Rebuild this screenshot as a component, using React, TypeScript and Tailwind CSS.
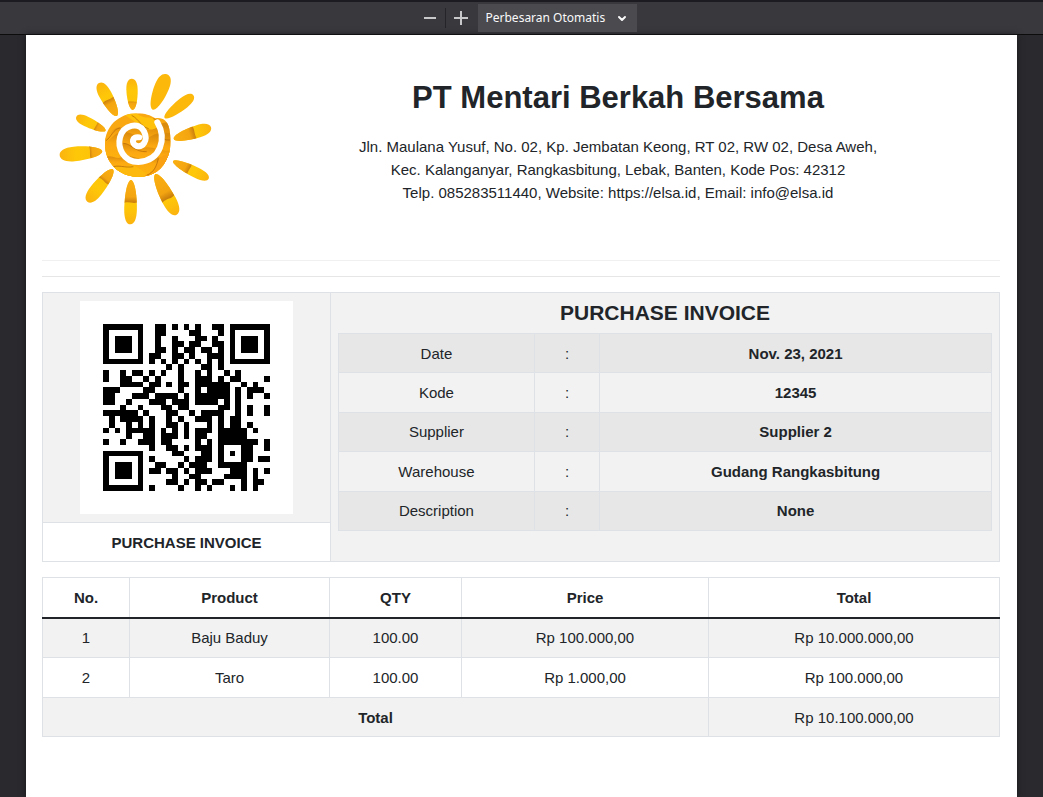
const QR_ROWS = [
  "#######..##.#.#.#..##.#######",
  "#.....#..##....##...#.#.....#",
  "#.###.#..#..#...##.#..#.###.#",
  "#.###.#..#..##.##..##.#.###.#",
  "#.###.#..##.#.##.##.#.#.###.#",
  "#.....#.##..##.#..###.#.....#",
  "#######.#.#.#.#.#.#.#.#######",
  "...........#.#...##.#........",
  "#..#.##.#.#..#..#.#..#.#.....",
  "#..##..#.#...#..###.#.##....#",
  "...####.##.#.##.######..#.#..",
  "###....##....#..#.####.#.###.",
  "##...###.####.#.######.#.#..#",
  "##..#...###.###.####.#.#.....",
  "...#..#...##.##.....##.#.#..#",
  "######.#...##..#.####..#.#..#",
  ".#.####.#..#.#..###.#.##.....",
  ".#..#.#.#..##.#...#.#.##.#...",
  "#.#.#####.#.#.#.###.#####.#..",
  "....#..##.###.#.##..#####....",
  "#..#..###.##....#.#.#######.#",
  "........#..##.#.###.#...##..#",
  "#######.....##...##.#.#.##...",
  "#.....#.#.....#.###.#...##.##",
  "#.###.#..##..#.###..#####....",
  "#.###.#.##.##.#.###...###.#.#",
  "#.###.#.....#..##....####.#..",
  "#.....#....##.#.##.##...#.##.",
  "#######.#....#..#.#...#.#.#..",
];

function QrCode() {
  const d = QR_ROWS.map((row, y) =>
    [...row].map((m, x) => (m === "#" ? `M${x} ${y}h1v1h-1z` : "")).join("")
  ).join("");
  return (
    <svg viewBox="-4 -4 37 37" className="size-[213px] bg-white" shapeRendering="crispEdges" role="img" aria-label="QR code">
      <path d={d} fill="#000" />
    </svg>
  );
}

const RAYS = [
  { tip: [201, 168], end: [147, 69], w: 38, band: 0.48 },
  { tip: [248, 150], end: [245, 56], w: 34, band: 0.25 },
  { tip: [308, 149], end: [351, 43], w: 44, band: -1 },
  { tip: [344, 174], end: [430, 106], w: 34, band: -1 },
  { tip: [371, 237], end: [483, 202], w: 38, band: 0.55 },
  { tip: [369, 303], end: [476, 356], w: 32, band: 0.45 },
  { tip: [316, 342], end: [380, 464], w: 42, band: 0.6 },
  { tip: [243, 360], end: [241, 493], w: 38, band: 0.5 },
  { tip: [189, 328], end: [112, 425], w: 40, band: 0.35 },
  { tip: [157, 274], end: [29, 286], w: 44, band: 0.28 },
  { tip: [167, 212], end: [79, 170], w: 30, band: 0.32 },
];

function Sun() {
  return (
    <svg viewBox="0 0 540 540" className="size-[180px]" role="img" aria-label="PT Mentari Berkah Bersama logo">
      <defs>
        <linearGradient id="ray" x1="0" x2="1">
          <stop offset="0" stopColor="#fcc00a" />
          <stop offset="0.6" stopColor="#fec808" />
          <stop offset="1" stopColor="#fbb30f" />
        </linearGradient>
        <linearGradient id="shade" x1="0" x2="1">
          <stop offset="0" stopColor="#fbb011" />
          <stop offset="0.7" stopColor="#f3a511" />
          <stop offset="1" stopColor="#b96f0a" />
        </linearGradient>
        <linearGradient id="fold" x1="0" y1="1" x2="0.1" y2="0">
          <stop offset="0" stopColor="#ffbd0c" />
          <stop offset="0.78" stopColor="#fca911" />
          <stop offset="1" stopColor="#db8b0c" />
        </linearGradient>
        <clipPath id="disc">
          <path d="M165 253C165 200 205 160 262 160C285 160 301 166 316 175C337 171 354 183 358 207C364 240 362 270 354 289C339 328 310 351 264 351C207 349 165 309 165 253Z" />
        </clipPath>
      </defs>
      {RAYS.map(({ tip, end, w, band }, i) => {
        const dx = end[0] - tip[0];
        const dy = end[1] - tip[1];
        const l = Math.hypot(dx, dy);
        const h = w / 2;
        const a = (Math.atan2(dy, dx) * 180) / Math.PI;
        const body = `M0 0C${l * 0.02} ${-h * 0.65} ${l * 0.38} ${-h} ${l * 0.66} ${-h}C${l * 0.88} ${-h} ${l} ${-h * 0.62} ${l} 0C${l} ${h * 0.62} ${l * 0.88} ${h} ${l * 0.66} ${h}C${l * 0.38} ${h} ${l * 0.02} ${h * 0.65} 0 0Z`;
        const b = l * band;
        return (
          <g key={i} transform={`translate(${tip[0]} ${tip[1]}) rotate(${a})`}>
            <clipPath id={`ray-${i}`}>
              <path d={body} />
            </clipPath>
            <path d={body} fill={band < 0 ? "#fdb80c" : "url(#ray)"} />
            {band > 0 && (
              <path
                clipPath={`url(#ray-${i})`}
                d={`M-5 -30H${b - 8}C${b + 14} -12 ${b - 10} 6 ${b + 8} 30H-5Z`}
                fill="url(#shade)"
              />
            )}
          </g>
        );
      })}
      <g clipPath="url(#disc)">
        <path d="M150 150H380V360H150Z" fill="#f9a812" />
        <path d="M150 245C178 235 180 205 208 202C250 202 250 175 285 197C310 208 330 182 380 185V370H150Z" fill="url(#fold)" />
        <path d="M255 155C280 185 305 160 330 190C320 212 300 212 278 203C260 190 245 178 225 165Z" fill="#ffc10a" />
        <path d="M150 260C190 235 190 215 225 215C255 220 270 240 300 230C325 215 345 215 380 222V370H150Z" fill="url(#fold)" />
        <path d="M215 248C238 250 250 270 278 264C310 255 330 280 370 270V370H190Z" fill="url(#fold)" />
        <path d="M150 300C178 275 195 300 215 292C245 278 262 305 300 295C320 288 340 300 380 290V370H150Z" fill="url(#fold)" />
        <path d="M180 330C195 312 215 325 235 318C262 310 280 342 300 344L280 370H180Z" fill="#fdb90d" />
        <path d="M285 345C310 340 318 322 325 300C332 285 350 280 370 285V370H285Z" fill="#f9a113" />
        <path d="M168 242C185 230 190 206 210 204M245 166C270 180 272 200 296 206M310 176C325 182 330 188 334 205M180 323C208 312 222 325 250 320M290 346C315 335 320 315 325 296M337 234C345 240 352 240 360 240M220 250C243 250 255 277 290 275" fill="none" stroke="#b66b09" strokeWidth="3" opacity="0.75" />
      </g>
      <path
        d="M322 187C350 235 334 301 265 306C220 305 202 264 210 232C221 193 267 185 282 214C296 243 277 263 260 258C242 250 246 228 268 232"
        fill="none"
        stroke="#fff"
        strokeWidth="18"
        strokeLinecap="round"
      />
    </svg>
  );
}

const DETAILS = [
  ["Date", "Nov. 23, 2021"],
  ["Kode", "12345"],
  ["Supplier", "Supplier 2"],
  ["Warehouse", "Gudang Rangkasbitung"],
  ["Description", "None"],
];

const ITEMS = [
  ["1", "Baju Baduy", "100.00", "Rp 100.000,00", "Rp 10.000.000,00"],
  ["2", "Taro", "100.00", "Rp 1.000,00", "Rp 100.000,00"],
];

function Toolbar() {
  return (
    <header className="flex h-[35px] items-center justify-center border-t-2 border-b border-t-[#1c1b22] border-b-[#0c0c0d] bg-[#38383d] pl-2">
      <button type="button" aria-label="Perkecil" className="flex h-7 w-[30px] items-center justify-center text-[#c8c8ca]">
        <svg viewBox="0 0 16 16" className="size-4" fill="none" stroke="currentColor" strokeWidth="2">
          <path d="M2 8h12" />
        </svg>
      </button>
      <span className="h-5 w-px bg-[#252529]" />
      <button type="button" aria-label="Perbesar" className="flex h-7 w-[30px] items-center justify-center text-[#c8c8ca]">
        <svg viewBox="0 0 16 16" className="size-4" fill="none" stroke="currentColor" strokeWidth="2">
          <path d="M1 8h14M8 1v14" />
        </svg>
      </button>
      <div className="relative ml-0.5">
        <select
          aria-label="Perbesaran"
          className="h-7 w-[159px] appearance-none bg-[#4a4a4f] pl-2 font-['Noto_Sans',sans-serif] text-xs text-[#f9f9fa]"
        >
          <option>Perbesaran Otomatis</option>
        </select>
        <svg
          viewBox="0 0 16 16"
          className="pointer-events-none absolute top-1.5 right-[7px] size-4"
          fill="none"
          stroke="#f9f9fa"
          strokeWidth="2"
          strokeLinecap="round"
          strokeLinejoin="round"
        >
          <path d="M5 7l3 3 3-3" />
        </svg>
      </div>
    </header>
  );
}

export default function App() {
  return (
    <div className="flex min-h-screen flex-col bg-[#2a2a2e] font-['Liberation_Sans',Arial,sans-serif] text-[15px] leading-[23px] text-[#212529]">
      <Toolbar />
      <main className="mx-[26px] flex-1 bg-white pr-[17px] pb-[60px] pl-4 shadow-[0_0_6px_#18181b]">
        <section className="flex h-[226px] border-b border-[#f0f0f0]">
          <div className="w-[194px] shrink-0 pt-[25px] pl-2">
            <Sun />
          </div>
          <div className="flex-1 pt-11 text-center">
            <h1 className="mb-[18px] text-[31px] leading-[38px] font-bold">PT Mentari Berkah Bersama</h1>
            <p>
              Jln. Maulana Yusuf, No. 02, Kp. Jembatan Keong, RT 02, RW 02, Desa Aweh,
              <br />
              Kec. Kalanganyar, Rangkasbitung, Lebak, Banten, Kode Pos: 42312
              <br />
              Telp. 085283511440, Website: https://elsa.id, Email: info@elsa.id
            </p>
          </div>
        </section>
        <hr className="my-[15px] border-[#e6e6e7]" />

        <section className="flex border border-[#dee2e6] bg-[#f2f2f2]">
          <div className="flex w-[288px] flex-col border-r border-[#dee2e6]">
            <div className="flex justify-center py-2">
              <QrCode />
            </div>
            <p className="flex h-[39px] items-center justify-center border-t border-[#dee2e6] bg-white font-bold">PURCHASE INVOICE</p>
          </div>
          <div className="flex-1 px-[7px] pt-1.5">
            <h2 className="mb-1.5 text-center text-[21px] leading-7 font-bold">PURCHASE INVOICE</h2>
            <table className="h-[198px] w-full table-fixed border-collapse text-center">
              <colgroup>
                <col className="w-[30%]" />
                <col className="w-[10%]" />
                <col className="w-[60%]" />
              </colgroup>
              <tbody>
                {DETAILS.map(([label, value]) => (
                  <tr key={label} className="odd:bg-[#e7e7e7]">
                    <th scope="row" className="border border-[#dee2e6] font-normal">{label}</th>
                    <td className="border border-[#dee2e6]">:</td>
                    <td className="border border-[#dee2e6] font-bold">{value}</td>
                  </tr>
                ))}
              </tbody>
            </table>
          </div>
        </section>

        <table className="mt-[15px] w-full table-fixed border-collapse text-center">
          <colgroup>
            <col className="w-[87px]" />
            <col className="w-[200px]" />
            <col className="w-[132px]" />
            <col className="w-[247px]" />
            <col />
          </colgroup>
          <thead>
            <tr className="h-10 border-b-2 border-[#212529]">
              {["No.", "Product", "QTY", "Price", "Total"].map((h) => (
                <th key={h} scope="col" className="border-x border-t border-x-[#dee2e6] border-t-[#dee2e6] font-bold">{h}</th>
              ))}
            </tr>
          </thead>
          <tbody>
            {ITEMS.map((row) => (
              <tr key={row[0]} className="h-10 odd:bg-[#f2f2f2]">
                {row.map((cell, i) => (
                  <td key={i} className="border border-[#dee2e6]">{cell}</td>
                ))}
              </tr>
            ))}
            <tr className="h-[39px] bg-[#f2f2f2]">
              <th scope="row" colSpan={4} className="border border-[#dee2e6] font-bold">Total</th>
              <td className="border border-[#dee2e6]">Rp 10.100.000,00</td>
            </tr>
          </tbody>
        </table>
      </main>
    </div>
  );
}
